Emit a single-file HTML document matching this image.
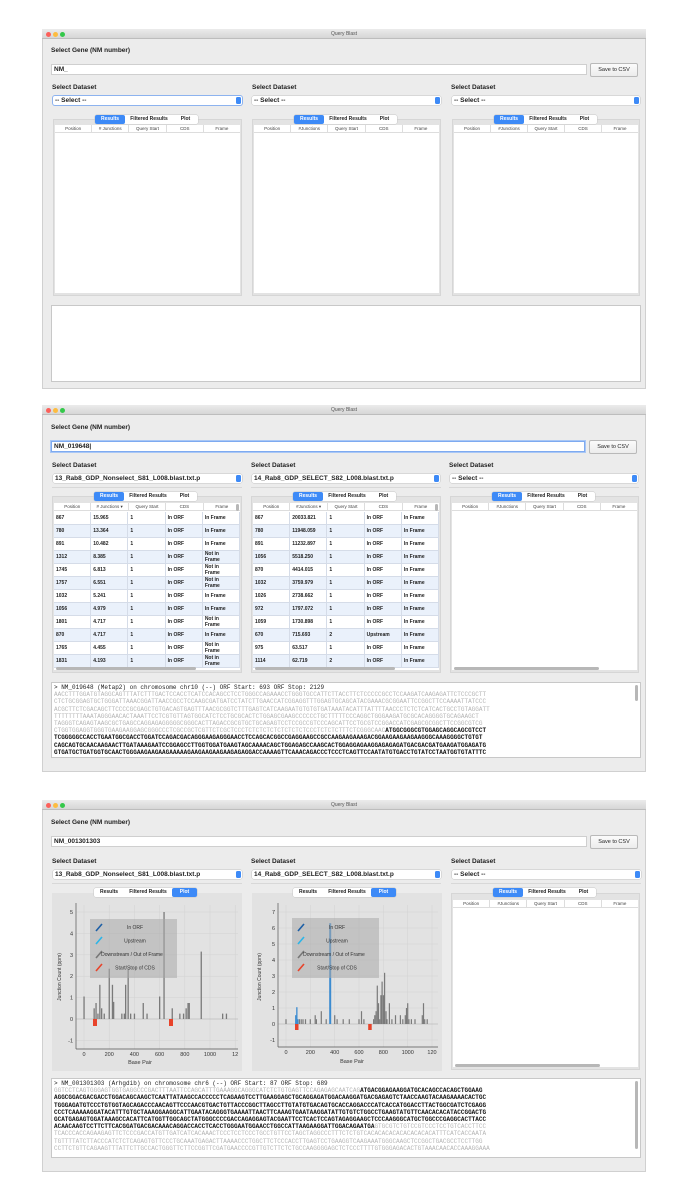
<!DOCTYPE html>
<html><head><meta charset="utf-8"><style>
*{box-sizing:border-box;margin:0;padding:0}
body{width:676px;height:1200px;background:#fff;position:relative;overflow:hidden;font-family:"Liberation Sans",Arial,sans-serif;color:#222}
.a{position:absolute}
.win{position:absolute;left:42px;width:604px;background:#ececec;border:1px solid #d0d0d0}
.tb{position:absolute;left:42px;width:604px;height:10px;background:linear-gradient(#ebebeb,#d6d6d6);border-bottom:1px solid #bdbdbd}
.tb i{position:absolute;top:3px;width:5px;height:5px;border-radius:50%}
.tb span{position:absolute;left:0;right:0;text-align:center;font-size:5px;line-height:10px;color:#555}
.lbl{position:absolute;font-size:6.5px;font-weight:bold;line-height:8px;white-space:nowrap}
.inp{position:absolute;background:#fff;border:1px solid #cfcfcf;font-size:6.5px;font-weight:bold;line-height:9px;padding-left:2px}
.btn{position:absolute;background:linear-gradient(#fbfbfb,#ececec);border:1px solid #b9b9b9;border-radius:2px;font-size:5.5px;text-align:center;line-height:12px}
.sel{position:absolute;height:9px;background:#fff;border-radius:2px;box-shadow:0 0 0 .5px #c4c4c4;font-size:6.5px;font-weight:bold;line-height:9px;padding-left:2px;white-space:nowrap;overflow:hidden}
.sel b{position:absolute;right:1px;top:1px;width:5px;height:7px;background:#3d8af7;border-radius:1.5px}
.sep{position:absolute;height:1px;background:#d8d8d8}
.panel{position:absolute;background:#e3e3e3;border:1px solid #d6d6d6}
.tbl{position:absolute;background:#fff}
.hdr{position:absolute;left:0;right:0;top:0;height:8px;background:#fff;border-bottom:1px solid #ddd;display:flex;font-size:4.5px;line-height:8px;color:#444}
.hdr div{flex:1;text-align:center;border-right:1px solid #ddd}
.tabs{position:absolute;height:9px;display:flex;font-size:5px;font-weight:bold;line-height:9px;background:#fff;border-radius:2px;box-shadow:0 0 0 .5px #c8c8c8}
.tabs div{text-align:center}
.tabs .on{background:#3d8af7;color:#fff;border-radius:2px}
.ta{position:absolute;background:#fff;border:1px solid #c8c8c8;overflow:hidden}
.seq{position:absolute;left:2px;top:1px;font-family:"Liberation Mono",monospace;font-size:6px;line-height:7.2px;white-space:pre;color:#222}
.g{color:#b5b5b5}.k{color:#111;font-weight:bold}
.row{position:absolute;left:0;right:0;height:13px;display:flex;font-size:5px;font-weight:bold;line-height:13px;border-bottom:1px solid #d5dce8}
.row div{width:37.6px;padding-left:2px;border-right:1px solid #d5dce8;overflow:hidden;white-space:nowrap}
.row div.nf{line-height:5.2px;padding-top:1.3px}
.row.b{background:#eaf1fb}
.hs{position:absolute;height:3px;background:#b7b7b7;border-radius:2px}
.vs{position:absolute;width:3px;background:#b7b7b7;border-radius:2px}
</style></head><body>

<!-- ========== WINDOW 1 ========== -->
<div class="win" style="top:29px;height:360px"></div>
<div class="tb" style="top:29px"><i style="left:4px;background:#fc605b"></i><i style="left:11px;background:#fdbc40"></i><i style="left:18px;background:#34c84a"></i><span>Query Blast</span></div>
<div class="lbl" style="left:51px;top:47px">Select Gene (NM number)</div>
<div class="inp" style="left:51px;top:64px;width:536px;height:11px">NM_</div>
<div class="btn" style="left:590px;top:63px;width:48px;height:14px">Save to CSV</div>

<div class="lbl" style="left:52px;top:84px">Select Dataset</div>
<div class="lbl" style="left:252px;top:84px">Select Dataset</div>
<div class="lbl" style="left:451px;top:84px">Select Dataset</div>
<div class="sel" style="left:53px;top:96px;width:189px;box-shadow:0 0 0 1px #8db3ef">-- Select --<b></b></div>
<div class="sel" style="left:252px;top:96px;width:189px">-- Select --<b></b></div>
<div class="sel" style="left:452px;top:96px;width:188px">-- Select --<b></b></div>

<div class="panel" style="left:53px;top:119px;width:189px;height:177px"><div class="tbl" style="left:1px;top:5px;right:1px;bottom:2px"><div class="hdr"><div>Position</div><div># Junctions</div><div>Query Start</div><div>CDS</div><div style="border:0">Frame</div></div></div></div>
<div class="panel" style="left:252px;top:119px;width:189px;height:177px"><div class="tbl" style="left:1px;top:5px;right:1px;bottom:2px"><div class="hdr"><div>Position</div><div>#Junctions</div><div>Query Start</div><div>CDS</div><div style="border:0">Frame</div></div></div></div>
<div class="panel" style="left:452px;top:119px;width:188px;height:177px"><div class="tbl" style="left:1px;top:5px;right:1px;bottom:2px"><div class="hdr"><div>Position</div><div>#Junctions</div><div>Query Start</div><div>CDS</div><div style="border:0">Frame</div></div></div></div>
<div class="tabs" style="left:95px;top:115px;width:103px"><div class="on" style="width:30px">Results</div><div style="width:48px">Filtered Results</div><div style="width:25px">Plot</div></div>
<div class="tabs" style="left:294px;top:115px;width:103px"><div class="on" style="width:30px">Results</div><div style="width:48px">Filtered Results</div><div style="width:25px">Plot</div></div>
<div class="tabs" style="left:494px;top:115px;width:103px"><div class="on" style="width:30px">Results</div><div style="width:48px">Filtered Results</div><div style="width:25px">Plot</div></div>

<div class="ta" style="left:51px;top:305px;width:590px;height:77px"></div>

<!-- ========== WINDOW 2 ========== -->
<div class="win" style="top:405px;height:367px"></div>
<div class="tb" style="top:405px"><i style="left:4px;background:#fc605b"></i><i style="left:11px;background:#fdbc40"></i><i style="left:18px;background:#34c84a"></i><span>Query Blast</span></div>
<div class="lbl" style="left:51px;top:424px">Select Gene (NM number)</div>
<div class="inp" style="left:51px;top:441px;width:534px;height:11px;border-color:#7eaaf0;box-shadow:0 0 0 1px #a9c7f5">NM_019648|</div>
<div class="btn" style="left:589px;top:440px;width:48px;height:14px">Save to CSV</div>
<div class="lbl" style="left:52px;top:462px">Select Dataset</div>
<div class="lbl" style="left:251px;top:462px">Select Dataset</div>
<div class="lbl" style="left:449px;top:462px">Select Dataset</div>
<div class="sel" style="left:53px;top:474px;width:189px">13_Rab8_GDP_Nonselect_S81_L008.blast.txt.p<b></b></div>
<div class="sel" style="left:252px;top:474px;width:188px">14_Rab8_GDP_SELECT_S82_L008.blast.txt.p<b></b></div>
<div class="sel" style="left:450px;top:474px;width:188px">-- Select --<b></b></div>
<div class="sep" style="left:52px;top:487px;width:190px"></div>
<div class="sep" style="left:251px;top:487px;width:190px"></div>
<div class="sep" style="left:449px;top:487px;width:190px"></div>

<div class="panel" style="left:52px;top:496px;width:190px;height:177px"><div class="tbl" style="left:1px;top:6px;right:1px;bottom:2px;overflow:hidden">
<div class="hdr"><div>Position</div><div># Junctions ▾</div><div>Query Start</div><div>CDS</div><div style="border:0">Frame</div></div>
<div class="row" style="top:9px"><div>867</div><div>15.965</div><div>1</div><div>In ORF</div><div>In Frame</div></div>
<div class="row b" style="top:22px"><div>780</div><div>13.364</div><div>1</div><div>In ORF</div><div>In Frame</div></div>
<div class="row" style="top:35px"><div>891</div><div>10.482</div><div>1</div><div>In ORF</div><div>In Frame</div></div>
<div class="row b" style="top:48px"><div>1312</div><div>8.385</div><div>1</div><div>In ORF</div><div class="nf">Not in<br>Frame</div></div>
<div class="row" style="top:61px"><div>1745</div><div>6.813</div><div>1</div><div>In ORF</div><div class="nf">Not in<br>Frame</div></div>
<div class="row b" style="top:74px"><div>1757</div><div>6.551</div><div>1</div><div>In ORF</div><div class="nf">Not in<br>Frame</div></div>
<div class="row" style="top:87px"><div>1032</div><div>5.241</div><div>1</div><div>In ORF</div><div>In Frame</div></div>
<div class="row b" style="top:100px"><div>1056</div><div>4.979</div><div>1</div><div>In ORF</div><div>In Frame</div></div>
<div class="row" style="top:113px"><div>1801</div><div>4.717</div><div>1</div><div>In ORF</div><div class="nf">Not in<br>Frame</div></div>
<div class="row b" style="top:126px"><div>870</div><div>4.717</div><div>1</div><div>In ORF</div><div>In Frame</div></div>
<div class="row" style="top:139px"><div>1765</div><div>4.455</div><div>1</div><div>In ORF</div><div class="nf">Not in<br>Frame</div></div>
<div class="row b" style="top:152px"><div>1831</div><div>4.193</div><div>1</div><div>In ORF</div><div class="nf">Not in<br>Frame</div></div>
<div class="hs" style="left:2px;top:164px;width:140px"></div><div class="vs" style="right:1px;top:1px;height:7px"></div>
</div></div>

<div class="panel" style="left:251px;top:496px;width:190px;height:177px"><div class="tbl" style="left:1px;top:6px;right:1px;bottom:2px;overflow:hidden">
<div class="hdr"><div>Position</div><div>#Junctions ▾</div><div>Query Start</div><div>CDS</div><div style="border:0">Frame</div></div>
<div class="row" style="top:9px"><div>867</div><div>20033.821</div><div>1</div><div>In ORF</div><div>In Frame</div></div>
<div class="row b" style="top:22px"><div>780</div><div>11948.059</div><div>1</div><div>In ORF</div><div>In Frame</div></div>
<div class="row" style="top:35px"><div>891</div><div>11232.897</div><div>1</div><div>In ORF</div><div>In Frame</div></div>
<div class="row b" style="top:48px"><div>1056</div><div>5518.250</div><div>1</div><div>In ORF</div><div>In Frame</div></div>
<div class="row" style="top:61px"><div>870</div><div>4414.015</div><div>1</div><div>In ORF</div><div>In Frame</div></div>
<div class="row b" style="top:74px"><div>1032</div><div>3759.979</div><div>1</div><div>In ORF</div><div>In Frame</div></div>
<div class="row" style="top:87px"><div>1026</div><div>2738.662</div><div>1</div><div>In ORF</div><div>In Frame</div></div>
<div class="row b" style="top:100px"><div>972</div><div>1797.072</div><div>1</div><div>In ORF</div><div>In Frame</div></div>
<div class="row" style="top:113px"><div>1059</div><div>1730.898</div><div>1</div><div>In ORF</div><div>In Frame</div></div>
<div class="row b" style="top:126px"><div>670</div><div>715.693</div><div>2</div><div>Upstream</div><div>In Frame</div></div>
<div class="row" style="top:139px"><div>975</div><div>63.517</div><div>1</div><div>In ORF</div><div>In Frame</div></div>
<div class="row b" style="top:152px"><div>1114</div><div>62.719</div><div>2</div><div>In ORF</div><div>In Frame</div></div>
<div class="hs" style="left:2px;top:164px;width:140px"></div><div class="vs" style="right:1px;top:1px;height:7px"></div>
</div></div>

<div class="panel" style="left:450px;top:496px;width:189px;height:177px"><div class="tbl" style="left:1px;top:6px;right:1px;bottom:2px"><div class="hdr"><div>Position</div><div>#Junctions</div><div>Query Start</div><div>CDS</div><div style="border:0">Frame</div></div><div class="hs" style="left:2px;top:164px;width:145px"></div></div></div>
<div class="tabs" style="left:94px;top:492px;width:103px"><div class="on" style="width:30px">Results</div><div style="width:48px">Filtered Results</div><div style="width:25px">Plot</div></div>
<div class="tabs" style="left:293px;top:492px;width:103px"><div class="on" style="width:30px">Results</div><div style="width:48px">Filtered Results</div><div style="width:25px">Plot</div></div>
<div class="tabs" style="left:492px;top:492px;width:103px"><div class="on" style="width:30px">Results</div><div style="width:48px">Filtered Results</div><div style="width:25px">Plot</div></div>

<div class="ta" style="left:51px;top:682px;width:590px;height:76px"><div class="vs" style="right:2px;top:2px;height:16px"></div>
<div class="seq">&gt; NM_019648 (Metap2) on chromosome chr10 (--) ORF Start: 693 ORF Stop: 2129
<span class="g">AACCTTTGGATGTAGGCAGTTTATCTTTGACTCCACCTCATCCACAGCCTCCTGGGCCAGAAACCTGGGTGCCATTCTTACCTTCTCCCCCGCCTCCAAGATCAAGAGATTCTCCCGCTT
CTCTGCGGAGTGCTGGGATTAAACGGATTAACCGCCTCCAAGCGATGATCCTATCTTGAACCATCGGAGGTTTGGAGTGCAGCATACGAAACGCGGAATTCCGGCTTCCAAAATTATCCC
ACGCTTCTCGACAGCTTCCCCGCGAGCTGTGACAGTGAGTTTAACGCGGTCTTTGAGTCATCAAGAATGTGTGTGATAAATACATTTATTTTAACCCTCTCTCATCACTGCCTGTAGGATT
TTTTTTTTAAATAGGGAACACTAAATTCCTCGTGTTAGTGGCATCTCCTGCGCACTCTGGAGCGAAGCCCCCCTGCTTTTTCCCAGGCTGGGAAGATGCGCACAGGGGTGCAGAAGCT
TAGGGTCAGAGTAAGCGCTGAGCCAGGAGAGGGGGCGGGCACTTAGACCGCGTGCTGCAGAGTCCTCCGCCGTCCCAGCATTCCTGCGTCCGGACCATCGAGCGCGGCTTCCGGCGTCG
CTGGTGGAGGTGGGTGAAGAAGGAGCGGGCCCTCGCCGCTCGTTCTCGCTCCCTCTCTCTCTCTCTCTCTCCCTCTCTCTTTCTCGGGCAAC</span><span class="k">ATGGCGGGCGTGGAGCAGGCAGCGTCCT</span>
<span class="k">TCGGGGGCCACCTGAATGGCGACCTGGATCCAGACGACAGGGAAGAGGGAACCTCCAGCACGGCCGAGGAAGCCGCCAAGAAGAAAGACGGAAGAAGAAGAAGGGCAAAGGGGCTGTGT
CAGCAGTGCAACAAGAACTTGATAAAGAATCCGGAGCCTTGGTGGATGAAGTAGCAAAACAGCTGGAGAGCCAAGCACTGGAGGAGAAGGAGAGAGATGACGACGATGAAGATGGAGATG
GTGATGCTGATGGTGCAACTGGGAAGAAGAAGAAAAAGAAGAAGAAGAAGAGAGGACCAAAAGTTCAAACAGACCCTCCCTCAGTTCCAATATGTGACCTGTATCCTAATGGTGTATTTC</span></div></div>

<!-- ========== WINDOW 3 ========== -->
<div class="win" style="top:800px;height:372px"></div>
<div class="tb" style="top:800px"><i style="left:4px;background:#fc605b"></i><i style="left:11px;background:#fdbc40"></i><i style="left:18px;background:#34c84a"></i><span>Query Blast</span></div>
<div class="lbl" style="left:51px;top:819px">Select Gene (NM number)</div>
<div class="inp" style="left:51px;top:836px;width:536px;height:11px">NM_001301303</div>
<div class="btn" style="left:590px;top:835px;width:48px;height:14px">Save to CSV</div>
<div class="lbl" style="left:52px;top:858px">Select Dataset</div>
<div class="lbl" style="left:251px;top:858px">Select Dataset</div>
<div class="lbl" style="left:451px;top:858px">Select Dataset</div>
<div class="sel" style="left:53px;top:870px;width:189px">13_Rab8_GDP_Nonselect_S81_L008.blast.txt.p<b></b></div>
<div class="sel" style="left:252px;top:870px;width:189px">14_Rab8_GDP_SELECT_S82_L008.blast.txt.p<b></b></div>
<div class="sel" style="left:452px;top:870px;width:189px">-- Select --<b></b></div>
<div class="sep" style="left:52px;top:883px;width:190px"></div>
<div class="sep" style="left:251px;top:883px;width:190px"></div>
<div class="sep" style="left:451px;top:883px;width:190px"></div>

<svg class="a" style="left:52px;top:893px" width="190" height="178" font-family="Liberation Sans, sans-serif">
<rect width="190" height="178" fill="#e2e2e2"/>
<g stroke="#d2d2d2" stroke-width=".5"><line x1="32" y1="12" x2="32" y2="156"/><line x1="57.2" y1="12" x2="57.2" y2="156"/><line x1="82.4" y1="12" x2="82.4" y2="156"/><line x1="107.6" y1="12" x2="107.6" y2="156"/><line x1="132.8" y1="12" x2="132.8" y2="156"/><line x1="158" y1="12" x2="158" y2="156"/><line x1="183.2" y1="12" x2="183.2" y2="156"/>
<line x1="24" y1="19" x2="186" y2="19"/><line x1="24" y1="40.4" x2="186" y2="40.4"/><line x1="24" y1="61.8" x2="186" y2="61.8"/><line x1="24" y1="83.2" x2="186" y2="83.2"/><line x1="24" y1="104.6" x2="186" y2="104.6"/><line x1="24" y1="147.4" x2="186" y2="147.4"/></g>
<line x1="24" y1="126" x2="186" y2="126" stroke="#aaa" stroke-width=".6"/>
<line x1="24" y1="10" x2="24" y2="156" stroke="#555" stroke-width=".7"/><line x1="24" y1="156" x2="186" y2="156" stroke="#555" stroke-width=".7"/>
<g font-size="5.5" fill="#333" text-anchor="end"><text x="21" y="21">5</text><text x="21" y="42.4">4</text><text x="21" y="63.8">3</text><text x="21" y="85.2">2</text><text x="21" y="106.6">1</text><text x="21" y="128">0</text><text x="21" y="149.4">-1</text></g>
<g font-size="5.5" fill="#333" text-anchor="middle"><text x="32" y="163">0</text><text x="57.2" y="163">200</text><text x="82.4" y="163">400</text><text x="107.6" y="163">600</text><text x="132.8" y="163">800</text><text x="158" y="163">1000</text><text x="183.2" y="163">12</text><text x="88" y="171">Base Pair</text></g>
<text x="9" y="84" font-size="5" fill="#333" text-anchor="middle" transform="rotate(-90 9 84)">Junction Count (ppm)</text>
<g fill="#7a7a7a">
<rect x="31.4" y="103.5" width="1.3" height="22.5"/><rect x="41.5" y="115.3" width="1.3" height="10.7"/><rect x="43.4" y="110" width="1.3" height="16"/><rect x="45.3" y="120.6" width="1.3" height="5.4"/><rect x="47.2" y="91.8" width="1.3" height="34.2"/><rect x="49" y="115.3" width="1.3" height="10.7"/><rect x="51.6" y="120.6" width="1.3" height="5.4"/><rect x="56.6" y="75.7" width="1.3" height="50.3"/><rect x="59.8" y="91.8" width="1.3" height="34.2"/><rect x="61" y="108.9" width="1.3" height="17.1"/><rect x="69.2" y="120.6" width="1.3" height="5.4"/><rect x="71.7" y="120.6" width="1.3" height="5.4"/><rect x="73" y="91.8" width="1.3" height="34.2"/><rect x="75.5" y="75.7" width="1.3" height="50.3"/><rect x="78" y="120.6" width="1.3" height="5.4"/><rect x="81.8" y="120.6" width="1.3" height="5.4"/><rect x="90.6" y="110" width="1.3" height="16"/><rect x="94.4" y="120.6" width="1.3" height="5.4"/><rect x="107" y="103.5" width="1.3" height="22.5"/><rect x="111.4" y="19" width="1.3" height="107"/><rect x="119.6" y="115.3" width="1.3" height="10.7"/><rect x="127.2" y="120.6" width="1.3" height="5.4"/><rect x="130.9" y="120.6" width="1.3" height="5.4"/><rect x="133.5" y="115.3" width="1.3" height="10.7"/><rect x="135.4" y="110" width="1.3" height="16"/><rect x="136.6" y="110" width="1.3" height="16"/><rect x="148.6" y="58.6" width="1.3" height="67.4"/><rect x="170" y="120.6" width="1.3" height="5.4"/><rect x="173.8" y="120.6" width="1.3" height="5.4"/></g>
<g fill="#e8432a"><rect x="41" y="126" width="4" height="7"/><rect x="117" y="126" width="4" height="7"/></g>
<rect x="38" y="26" width="87" height="59" fill="#a9a9a9" fill-opacity=".55"/>
<g stroke-width="1.6"><line x1="44" y1="38" x2="50" y2="31" stroke="#1d5fa6"/><line x1="44" y1="51" x2="50" y2="44" stroke="#2bb5e8"/><line x1="44" y1="65" x2="50" y2="58" stroke="#777"/><line x1="44" y1="78" x2="50" y2="71" stroke="#e8432a"/></g>
<g font-size="5" fill="#333" text-anchor="middle"><text x="83" y="36">In ORF</text><text x="83" y="49.5">Upstream</text><text x="80" y="63">Downstream / Out of Frame</text><text x="83" y="76.5">Start/Stop of CDS</text></g>
</svg>

<svg class="a" style="left:252px;top:893px" width="190" height="178" font-family="Liberation Sans, sans-serif">
<rect width="190" height="178" fill="#e2e2e2"/>
<g stroke="#d2d2d2" stroke-width=".5"><line x1="34" y1="12" x2="34" y2="154"/><line x1="58.3" y1="12" x2="58.3" y2="154"/><line x1="82.7" y1="12" x2="82.7" y2="154"/><line x1="107" y1="12" x2="107" y2="154"/><line x1="131.4" y1="12" x2="131.4" y2="154"/><line x1="155.7" y1="12" x2="155.7" y2="154"/><line x1="180" y1="12" x2="180" y2="154"/>
<line x1="26" y1="19" x2="186" y2="19"/><line x1="26" y1="35" x2="186" y2="35"/><line x1="26" y1="51" x2="186" y2="51"/><line x1="26" y1="67" x2="186" y2="67"/><line x1="26" y1="83" x2="186" y2="83"/><line x1="26" y1="99" x2="186" y2="99"/><line x1="26" y1="115" x2="186" y2="115"/><line x1="26" y1="147" x2="186" y2="147"/></g>
<line x1="26" y1="131" x2="186" y2="131" stroke="#aaa" stroke-width=".6"/>
<line x1="26" y1="10" x2="26" y2="154" stroke="#555" stroke-width=".7"/><line x1="26" y1="154" x2="186" y2="154" stroke="#555" stroke-width=".7"/>
<g font-size="5.5" fill="#333" text-anchor="end"><text x="23" y="21">7</text><text x="23" y="37">6</text><text x="23" y="53">5</text><text x="23" y="69">4</text><text x="23" y="85">3</text><text x="23" y="101">2</text><text x="23" y="117">1</text><text x="23" y="133">0</text><text x="23" y="149">-1</text></g>
<g font-size="5.5" fill="#333" text-anchor="middle"><text x="34" y="161">0</text><text x="58.3" y="161">200</text><text x="82.7" y="161">400</text><text x="107" y="161">600</text><text x="131.4" y="161">800</text><text x="155.7" y="161">1000</text><text x="180" y="161">120</text><text x="100" y="170">Base Pair</text></g>
<text x="9" y="84" font-size="5" fill="#333" text-anchor="middle" transform="rotate(-90 9 84)">Junction Count (ppm)</text>
<g fill="#7a7a7a">
<rect x="33.4" y="126.2" width="1.2" height="4.8"/><rect x="46.8" y="126.2" width="1.2" height="4.8"/><rect x="48.6" y="126.2" width="1.2" height="4.8"/><rect x="50.4" y="126.2" width="1.2" height="4.8"/><rect x="52.9" y="126.2" width="1.2" height="4.8"/><rect x="57.7" y="126.2" width="1.2" height="4.8"/><rect x="62.6" y="122.2" width="1.2" height="8.8"/><rect x="63.8" y="126.2" width="1.2" height="4.8"/><rect x="68.7" y="118.2" width="1.2" height="12.8"/><rect x="73.6" y="126.2" width="1.2" height="4.8"/><rect x="82.1" y="122.2" width="1.2" height="8.8"/><rect x="84.5" y="126.2" width="1.2" height="4.8"/><rect x="90.6" y="126.2" width="1.2" height="4.8"/><rect x="96.7" y="126.2" width="1.2" height="4.8"/><rect x="106.4" y="126.2" width="1.2" height="4.8"/><rect x="108.9" y="118.2" width="1.2" height="12.8"/><rect x="111.3" y="126.2" width="1.2" height="4.8"/><rect x="121" y="126.2" width="1.2" height="4.8"/><rect x="122.2" y="122.2" width="1.2" height="8.8"/><rect x="123.5" y="118.2" width="1.2" height="12.8"/><rect x="124.7" y="92.6" width="1.2" height="38.4"/><rect x="125.9" y="110.2" width="1.2" height="20.8"/><rect x="127.1" y="126.2" width="1.2" height="4.8"/><rect x="128.3" y="102.2" width="1.2" height="28.8"/><rect x="129.5" y="88.6" width="1.2" height="42.4"/><rect x="130.8" y="102.2" width="1.2" height="28.8"/><rect x="132" y="79.8" width="1.2" height="51.2"/><rect x="133.4" y="118.2" width="1.2" height="12.8"/><rect x="134.4" y="126.2" width="1.2" height="4.8"/><rect x="136.8" y="110.2" width="1.2" height="20.8"/><rect x="139.3" y="126.2" width="1.2" height="4.8"/><rect x="142.9" y="122.2" width="1.2" height="8.8"/><rect x="147.8" y="122.2" width="1.2" height="8.8"/><rect x="150.2" y="126.2" width="1.2" height="4.8"/><rect x="152.7" y="122.2" width="1.2" height="8.8"/><rect x="153.9" y="115" width="1.2" height="16"/><rect x="155.1" y="110.2" width="1.2" height="20.8"/><rect x="156.3" y="126.2" width="1.2" height="4.8"/><rect x="158.8" y="126.2" width="1.2" height="4.8"/><rect x="162.4" y="126.2" width="1.2" height="4.8"/><rect x="169.7" y="122.2" width="1.2" height="8.8"/><rect x="170.9" y="110.2" width="1.2" height="20.8"/><rect x="172.1" y="126.2" width="1.2" height="4.8"/><rect x="174.6" y="126.2" width="1.2" height="4.8"/></g>
<g fill="#3b8bd0"><rect x="43.1" y="122.2" width="1.3" height="8.8"/><rect x="44.2" y="114.2" width="1.3" height="16.8"/><rect x="45.2" y="126.2" width="1.3" height="4.8"/><rect x="77.2" y="30.2" width="2" height="100.8"/></g>
<g fill="#e8432a"><rect x="43" y="131" width="3.5" height="6"/><rect x="116.2" y="131" width="3.5" height="6"/></g>
<rect x="40" y="25" width="87" height="60" fill="#a9a9a9" fill-opacity=".55"/>
<g stroke-width="1.6"><line x1="46" y1="38" x2="52" y2="31" stroke="#1d5fa6"/><line x1="46" y1="51" x2="52" y2="44" stroke="#2bb5e8"/><line x1="46" y1="65" x2="52" y2="58" stroke="#777"/><line x1="46" y1="78" x2="52" y2="71" stroke="#e8432a"/></g>
<g font-size="5" fill="#333" text-anchor="middle"><text x="85" y="36">In ORF</text><text x="85" y="49.5">Upstream</text><text x="82" y="63">Downstream / Out of Frame</text><text x="85" y="76.5">Start/Stop of CDS</text></g>
</svg>

<div class="panel" style="left:451px;top:893px;width:189px;height:177px"><div class="tbl" style="left:1px;top:6px;right:1px;bottom:2px"><div class="hdr"><div>Position</div><div>#Junctions</div><div>Query Start</div><div>CDS</div><div style="border:0">Frame</div></div><div class="hs" style="left:2px;top:164px;width:145px"></div></div></div>
<div class="tabs" style="left:94px;top:888px;width:103px"><div style="width:30px">Results</div><div style="width:48px">Filtered Results</div><div class="on" style="width:25px">Plot</div></div>
<div class="tabs" style="left:293px;top:888px;width:103px"><div style="width:30px">Results</div><div style="width:48px">Filtered Results</div><div class="on" style="width:25px">Plot</div></div>
<div class="tabs" style="left:493px;top:888px;width:103px"><div class="on" style="width:30px">Results</div><div style="width:48px">Filtered Results</div><div style="width:25px">Plot</div></div>

<div class="ta" style="left:51px;top:1078px;width:590px;height:80px"><div class="vs" style="right:2px;top:2px;height:68px"></div>
<div class="seq">&gt; NM_001301303 (Arhgdib) on chromosome chr6 (--) ORF Start: 87 ORF Stop: 689
<span class="g">GGTCCTCAGTGGGAGTGGTGAGGCCCGACTTTAATTCCAGCATTTGAAAGGCAGGGCATCTCTGTGAGTTCCAGAGAGCAATCAG</span><span class="k">ATGACGGAGAAGGATGCACAGCCACAGCTGGAAG
AGGCGGACGACGACCTGGACAGCAAGCTCAATTATAAGCCACCCCCTCAGAAGTCCTTGAAGGAGCTGCAGGAGATGGACAAGGATGACGAGAGTCTAACCAAGTACAAGAAAACACTGC
TGGGAGATGTCCCTGTGGTAGCAGACCCAACAGTTCCCAACGTGACTGTTACCCGGCTTAGCCTTGTATGTGACAGTGCACCAGGACCCATCACCATGGACCTTACTGGCGATCTCGAGG
CCCTCAAAAAGGATACATTTGTGCTAAAGGAAGGCATTGAATACAGGGTGAAAATTAACTTCAAAGTGAATAAGGATATTGTGTCTGGCCTGAAGTATGTTCAACACACATACCGGACTG
GCATGAGAGTGGATAAAGCCACATTCATGGTTGGCAGCTATGGGCCCCGACCAGAGGAGTACGAATTCCTCACTCCAGTAGAGGAAGCTCCCAAGGGCATGCTGGCCCGAGGCACTTACC
ACAACAAGTCCTTCTTCACGGATGACGACAAACAGGACCACCTCACCTGGGAATGGAACCTGGCCATTAAGAAGGATTGGACAGAATGA</span><span class="g">GTGCGTCTGTCCGTCCCTCCTGTCACCTTCC
TCACCCACCAGAAGAGTTCTCCCGACCATGTTGATCATCACAAACTCCCTCCTCCCTGCCTGTTCCTAGCTAGGCCCTTTCTCTGTCACACACACACACACACACATTTCATCACCAATA
TGTTTTATCTTACCCATCTCTCAGAGTGTTCCCTGCAAATGAGACTTAAAACCCTGGCTTCTCCCACCTTGAGTCCTGAAGGTCAAGAAATGGGCAAGCTCCGGCTGACGCCTCCTTGG
CCTTCTGTTCAGAAGTTTATTCTTGCCACTGGGTTCTTCCGGTTCGATGAACCCCGTTGTCTTCTCTGCCAAGGGGAGCTCTCCCTTTTGTGGGAGACACTGTAAACAACACCAAAGGAAA</span></div></div>

</body></html>
